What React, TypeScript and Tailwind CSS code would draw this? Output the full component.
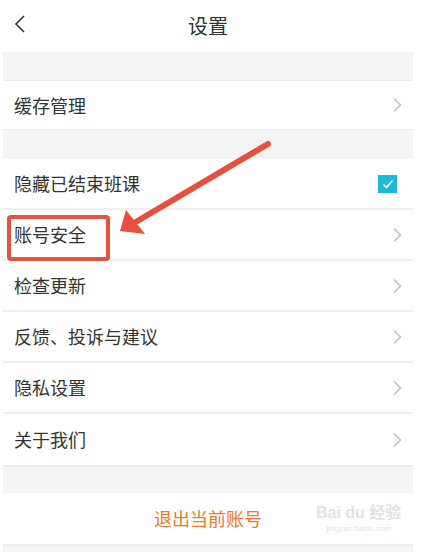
import React from "react";

const font = { fontFamily: '"Noto Sans CJK SC", "Noto Sans", sans-serif' };

function Chevron() {
  return (
    <svg width="10" height="16" viewBox="0 0 10 16" className="shrink-0">
      <polyline points="2,1.5 8.5,8 2,14.5" fill="none" stroke="#c3c3c3" strokeWidth="1.6" />
    </svg>
  );
}

function Row({ label, right, last }: { label: string; right?: React.ReactNode; last?: boolean }) {
  return (
    <div className={`flex h-[51px] items-center justify-between bg-white pl-[11px] pr-[11px] ${last ? "" : "border-b-2 border-[#efefef]"}`}>
      <span className="text-[18px] text-[#333333]">{label}</span>
      {right ?? <Chevron />}
    </div>
  );
}

export default function App() {
  return (
    <div className="relative h-[552px] w-[434px] overflow-hidden bg-white" style={font}>
      <div className="ml-[3px] flex w-[410px] flex-col">
        <div className="relative flex h-[52px] items-center justify-center bg-white">
          <svg width="12" height="18" viewBox="0 0 12 18" className="absolute left-[11px] top-[15px]">
            <polyline points="10,1 2,9 10,17" fill="none" stroke="#333" strokeWidth="1.6" />
          </svg>
          <span className="text-[20px] text-[#333333]">设置</span>
        </div>
        <div className="h-[28px] bg-[#f4f4f4]" />
        <div className="flex h-[50px] items-center justify-between border-y border-[#ececec] bg-white pl-[11px] pr-[11px]">
          <span className="text-[18px] text-[#333333]">缓存管理</span>
          <Chevron />
        </div>
        <div className="h-[29px] bg-[#f4f4f4]" />
        <Row
          label="隐藏已结束班课"
          right={
            <div className="mr-[5px] flex h-[18px] w-[19px] items-center justify-center bg-[#1bbbd5]">
              <svg width="12" height="10" viewBox="0 0 12 10">
                <polyline points="1.5,5.5 4.5,8.5 10.5,1.5" fill="none" stroke="white" strokeWidth="1.6" />
              </svg>
            </div>
          }
        />
        <Row label="账号安全" />
        <Row label="检查更新" />
        <Row label="反馈、投诉与建议" />
        <Row label="隐私设置" />
        <Row label="关于我们" last />
        <div className="h-[28px] border-t-2 border-[#ececec] bg-[#f4f4f4]" />
        <div className="flex h-[51px] items-center justify-center bg-white">
          <span className="text-[18px] text-[#f5781e]">退出当前账号</span>
        </div>
        <div className="h-[8px] border-t-2 border-[#ececec] bg-[#f4f4f4]" />
      </div>

      {/* annotation box */}
      <div className="absolute left-[7px] top-[215px] h-[46px] w-[103px] rounded-[4px] border-[4px] border-[#e8503b]" />
      {/* annotation arrow */}
      <svg className="absolute left-0 top-0" width="434" height="552" viewBox="0 0 434 552">
        <line x1="268" y1="144" x2="134" y2="223" stroke="#e8503b" strokeWidth="6" strokeLinecap="round" />
        <polygon points="120,231 126,210 145,234" fill="#e8503b" />
      </svg>
      {/* watermark */}
      <div className="absolute left-[316px] top-[505px] flex flex-col items-center leading-none text-[#e2e2e2]" style={{ fontFamily: '"Liberation Sans", "Noto Sans CJK SC", sans-serif' }}>
        <span className="text-[16px] font-bold">Bai du 经验</span>
        <span className="mt-[4px] text-[8px]">jingyan.baidu.com</span>
      </div>
    </div>
  );
}
